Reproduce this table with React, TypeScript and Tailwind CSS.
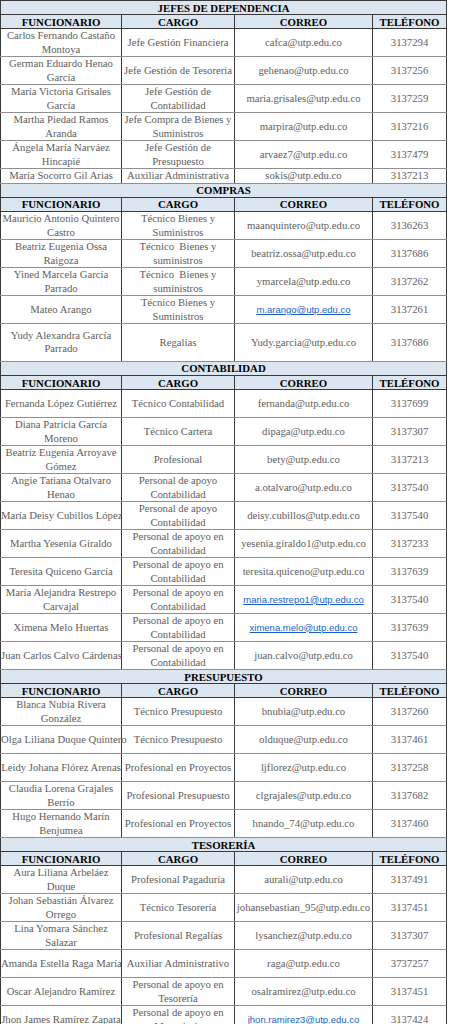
import React from "react";

type Person = {
  name: string;
  role: string;
  email: string;
  phone: string;
  h?: number;
  link?: boolean;
};

type Section = { title: string; rows: Person[] };

const sections: Section[] = [
  {
    title: "JEFES DE DEPENDENCIA",
    rows: [
      { name: "Carlos Fernando Castaño\nMontoya", role: "Jefe Gestión Financiera", email: "cafca@utp.edu.co", phone: "3137294" },
      { name: "German Eduardo Henao\nGarcía", role: "Jefe Gestión de Tesoreria", email: "gehenao@utp.edu.co", phone: "3137256" },
      { name: "María Victoria Grisales\nGarcía", role: "Jefe Gestión de\nContabilidad", email: "maria.grisales@utp.edu.co", phone: "3137259" },
      { name: "Martha Piedad Ramos\nAranda", role: "Jefe Compra de Bienes y\nSuministros", email: "marpira@utp.edu.co", phone: "3137216" },
      { name: "Ángela María Narváez\nHincapié", role: "Jefe Gestión de\nPresupuesto", email: "arvaez7@utp.edu.co", phone: "3137479" },
      { name: "María Socorro Gil Arias", role: "Auxiliar Administrativa", email: "sokis@utp.edu.co", phone: "3137213", h: 13.7 },
    ],
  },
  {
    title: "COMPRAS",
    rows: [
      { name: "Mauricio Antonio Quintero\nCastro", role: "Técnico Bienes y\nSuministros", email: "maanquintero@utp.edu.co", phone: "3136263" },
      { name: "Beatriz Eugenia Ossa\nRaigoza", role: "Técnico  Bienes y\nsuministros", email: "beatriz.ossa@utp.edu.co", phone: "3137686" },
      { name: "Yined Marcela García\nParrado", role: "Técnico  Bienes y\nsuministros", email: "ymarcela@utp.edu.co", phone: "3137262" },
      { name: "Mateo Arango", role: "Técnico Bienes y\nSuministros", email: "m.arango@utp.edu.co", phone: "3137261", link: true },
      { name: "Yudy Alexandra García\nParrado", role: "Regalías", email: "Yudy.garcia@utp.edu.co", phone: "3137686", h: 37.8 },
    ],
  },
  {
    title: "CONTABILIDAD",
    rows: [
      { name: "Fernanda López Gutiérrez", role: "Técnico Contabilidad", email: "fernanda@utp.edu.co", phone: "3137699" },
      { name: "Diana Patricia García\nMoreno", role: "Técnico Cartera", email: "dipaga@utp.edu.co", phone: "3137307" },
      { name: "Beatriz Eugenia Arroyave\nGómez", role: "Profesional", email: "bety@utp.edu.co", phone: "3137213" },
      { name: "Angie Tatiana Otalvaro\nHenao", role: "Personal de apoyo\nContabilidad", email: "a.otalvaro@utp.edu.co", phone: "3137540" },
      { name: "María Deisy Cubillos López", role: "Personal de apoyo\nContabilidad", email: "deisy.cubillos@utp.edu.co", phone: "3137540" },
      { name: "Martha Yesenia Giraldo", role: "Personal de apoyo en\nContabilidad", email: "yesenia.giraldo1@utp.edu.co", phone: "3137233" },
      { name: "Teresita Quiceno García", role: "Personal de apoyo en\nContabilidad", email: "teresita.quiceno@utp.edu.co", phone: "3137639" },
      { name: "María Alejandra Restrepo\nCarvajal", role: "Personal de apoyo en\nContabilidad", email: "maria.restrepo1@utp.edu.co", phone: "3137540", link: true },
      { name: "Ximena Melo Huertas", role: "Personal de apoyo en\nContabilidad", email: "ximena.melo@utp.edu.co", phone: "3137639", link: true },
      { name: "Juan Carlos Calvo Cárdenas", role: "Personal de apoyo en\nContabilidad", email: "juan.calvo@utp.edu.co", phone: "3137540" },
    ],
  },
  {
    title: "PRESUPUESTO",
    rows: [
      { name: "Blanca Nubia Rivera\nGonzález", role: "Técnico Presupuesto", email: "bnubia@utp.edu.co", phone: "3137260" },
      { name: "Olga Liliana Duque Quintero", role: "Técnico Presupuesto", email: "olduque@utp.edu.co", phone: "3137461" },
      { name: "Leidy Johana Flórez Arenas", role: "Profesional en Proyectos", email: "ljflorez@utp.edu.co", phone: "3137258" },
      { name: "Claudia Lorena Grajales\nBerrío", role: "Profesional Presupuesto", email: "clgrajales@utp.edu.co", phone: "3137682" },
      { name: "Hugo Hernando Marín\nBenjumea", role: "Profesional en Proyectos", email: "hnando_74@utp.edu.co", phone: "3137460" },
    ],
  },
  {
    title: "TESORERÍA",
    rows: [
      { name: "Aura Liliana Arbeláez\nDuque", role: "Profesional Pagaduría", email: "aurali@utp.edu.co", phone: "3137491" },
      { name: "Johan Sebastián Álvarez\nOrrego", role: "Técnico Tesorería", email: "johansebastian_95@utp.edu.co", phone: "3137451" },
      { name: "Lina Yomara Sánchez\nSalazar", role: "Profesional Regalías", email: "lysanchez@utp.edu.co", phone: "3137307" },
      { name: "Amanda Estella Raga María", role: "Auxiliar Administrativo", email: "raga@utp.edu.co", phone: "3737257" },
      { name: "Oscar Alejandro Ramírez", role: "Personal de apoyo en\nTesorería", email: "osalramirez@utp.edu.co", phone: "3137451" },
      { name: "Jhon James Ramírez Zapata", role: "Personal de apoyo en\nMensajería", email: "jhon.ramirez3@utp.edu.co", phone: "3137424", link: true },
    ],
  },
];

const serif = "font-['Liberation_Serif','Times_New_Roman',serif]";
const cell = "border-x border-x-[#3a3a3a] border-y border-y-[#8f8f8f] p-0 text-center align-middle whitespace-pre leading-[13.5px]";
const head = "border border-[#3a3a3a] p-0 text-center text-[10.8px] font-bold leading-[12px] text-black";

const SectionRows = ({ section }: { section: Section }) => (
  <tbody>
    <tr className="h-[14px] bg-[#dce6f1]">
      <td colSpan={4} className={head}>
        {section.title}
      </td>
    </tr>
    <tr className="h-[14.3px] bg-[#dce6f1]">
      {["FUNCIONARIO", "CARGO", "CORREO", "TELÉFONO"].map((label) => (
        <td key={label} className={head}>
          {label}
        </td>
      ))}
    </tr>
    {section.rows.map((row) => (
      <tr key={row.email} style={{ height: row.h ?? 27.85 }} className="bg-white text-[10.7px] text-[#606060]">
        <td className={cell}>{row.name}</td>
        <td className={cell}>{row.role}</td>
        <td className={cell}>
          {row.link ? (
            <span className="font-['Liberation_Sans',Arial,sans-serif] text-[9.5px] text-[#1a5fc8] underline">{row.email}</span>
          ) : (
            row.email
          )}
        </td>
        <td className={cell}>{row.phone}</td>
      </tr>
    ))}
  </tbody>
);

export default function App() {
  return (
    <div className={`h-[1024px] w-[451px] overflow-hidden bg-white ${serif}`}>
      <table className={`w-[446px] table-fixed border-collapse ${serif}`}>
        <colgroup>
          <col className="w-[121px]" />
          <col className="w-[113px]" />
          <col className="w-[138px]" />
          <col className="w-[74px]" />
        </colgroup>
        {sections.map((section) => (
          <SectionRows key={section.title} section={section} />
        ))}
      </table>
    </div>
  );
}
